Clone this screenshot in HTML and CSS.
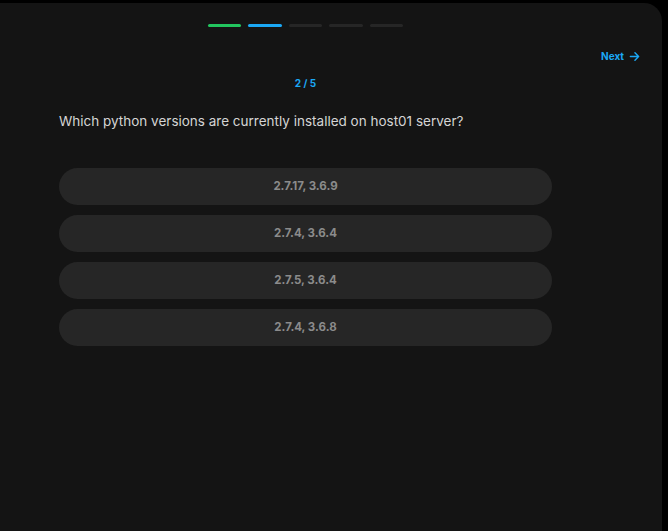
FILE: index.html
```html
<!DOCTYPE html>
<html>
<head>
<meta charset="utf-8">
<link rel="stylesheet" href="styles.css">
</head>
<body>
<div class="panel">
  <div class="progress">
    <span class="seg done"></span>
    <span class="seg current"></span>
    <span class="seg"></span>
    <span class="seg"></span>
    <span class="seg"></span>
  </div>
  <div class="next-row">
    <button class="next">Next
      <svg width="11" height="11" viewBox="0 0 12 12" fill="none" stroke="currentColor" stroke-width="1.6" stroke-linecap="round" stroke-linejoin="round"><path d="M1.5 6h9M6.5 2l4 4-4 4"/></svg>
    </button>
  </div>
  <div class="content">
    <div class="counter">2 / 5</div>
    <p class="question">Which python versions are currently installed on host01 server?</p>
    <div class="options">
      <button class="option">2.7.17, 3.6.9</button>
      <button class="option">2.7.4, 3.6.4</button>
      <button class="option">2.7.5, 3.6.4</button>
      <button class="option">2.7.4, 3.6.8</button>
    </div>
  </div>
</div>
</body>
</html>
```
FILE: styles.css
```css
* { box-sizing: border-box; }
html, body { margin: 0; padding: 0; background: #000; height: 100%; overflow: hidden; }
body { font-family: Inter, "Noto Sans", sans-serif; }
.panel {
  margin-top: 3px;
  width: 662px;
  min-height: 540px;
  background: #141414;
  border-top-right-radius: 18px;
}
.progress {
  width: 493px;
  margin-left: 59px;
  padding-top: 21px;
  display: flex;
  justify-content: center;
  gap: 7px;
}
.seg { width: 33.5px; height: 3px; border-radius: 2px; background: #262626; }
.seg.done { background: #22c55e; }
.seg.current { background: #1ba8f5; }
.next-row {
  display: flex;
  justify-content: flex-end;
  padding-right: 22px;
  margin-top: 21px;
}
.next {
  background: none;
  border: 0;
  padding: 0;
  color: #1ba8f5;
  font-family: inherit;
  font-size: 10px;
  font-weight: 700;
  line-height: 16px;
  display: flex;
  align-items: center;
  gap: 5px;
}
.content { width: 493px; margin-left: 59px; }
.counter {
  margin-top: 12px;
  text-align: center;
  color: #1ba8f5;
  font-size: 10px;
  font-weight: 700;
  line-height: 14px;
}
.question {
  margin: 21px 0 0;
  color: #d4d4d4;
  font-size: 13.5px;
  line-height: 20px;
}
.options { margin-top: 37px; display: flex; flex-direction: column; gap: 10px; }
.option {
  height: 37px;
  border: 0;
  border-radius: 19px;
  background: #262626;
  color: #8b8b8b;
  font-family: inherit;
  font-size: 11.5px;
  font-weight: 700;
  text-align: center;
  padding: 0 0 2px;
}
```
